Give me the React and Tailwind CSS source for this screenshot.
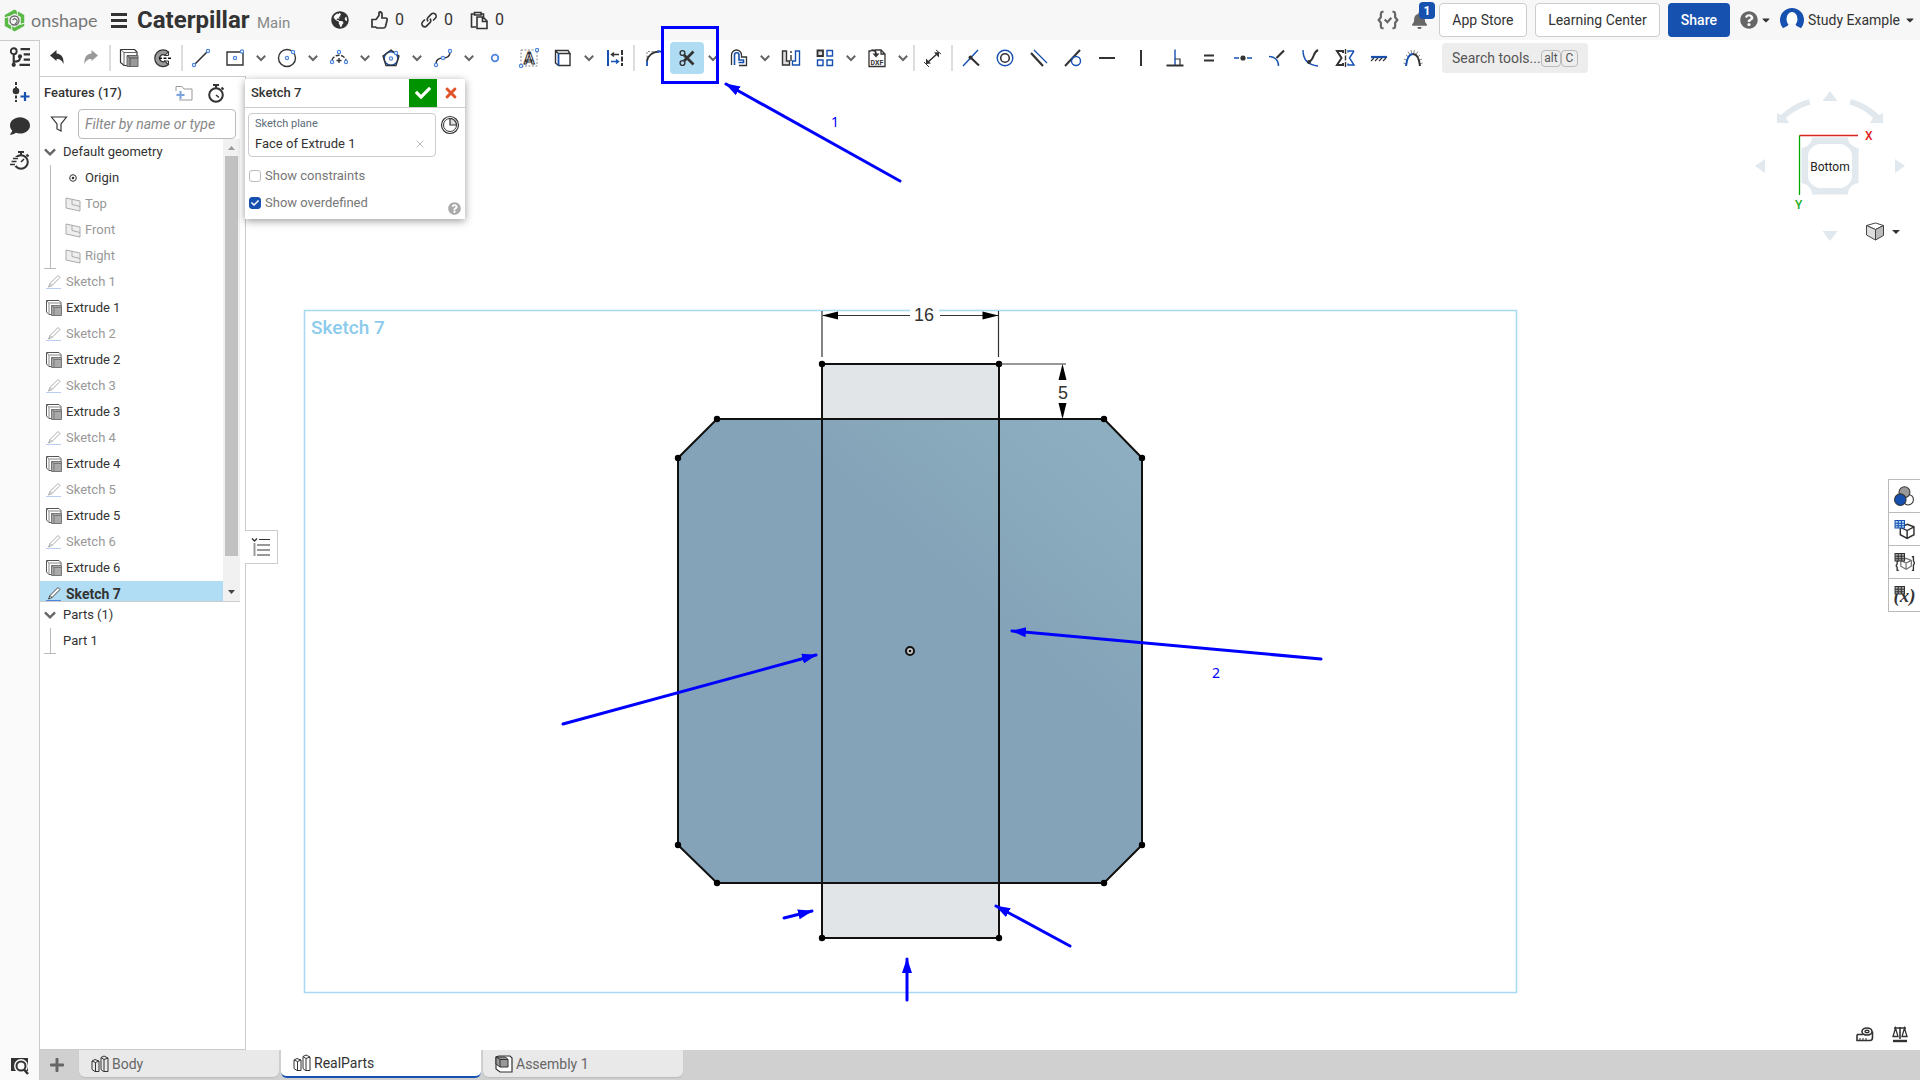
import { FaBell, FaCheck, FaComment, FaGlobeAmericas, FaQuestionCircle, FaTimes, FaCaretDown, FaPlus } from 'react-icons/fa'
import { useState } from 'react'

const DARK = '#333'
const BLUE = '#1651b0'
const SOFT = '#4f86dd'

function Icon({ size = 20, box = 20, children, className = '' }) {
  return (
    <svg
      width={size}
      height={size}
      viewBox={`0 0 ${box} ${box}`}
      fill="none"
      stroke={DARK}
      strokeWidth="1.4"
      className={`shrink-0 ${className}`}
      aria-hidden="true"
    >
      {children}
    </svg>
  )
}

// small sketch handle
function Dot({ x, y, r = 1.6 }) {
  return <circle cx={x} cy={y} r={r} fill="#fff" stroke={SOFT} strokeWidth="1.2" />
}

const glyphs = {
  undo: (
    <path d="M3 7.5L9.5 2v3.500c5 .5 7.500 4 7 10.500-1.200-3-3-5-7-5V13z" fill={DARK} stroke="none" />
  ),
  redo: (
    <path d="M17 7.500L10.500 2v3.500c-5 .5-7.500 4-7 10.500 1.200-3 3-5 7-5V13z" fill="#999" stroke="none" />
  ),
  extrude: (
    <>
      <path d="M1.500 1.500h14l2.500 2.500v13.500h-13l-3.500-3z" strokeWidth="1.200" fill="#fff" />
      <path d="M1.500 1.500l3.500 3h12.500M5 4.500v13" strokeWidth="1" stroke="#666" />
      <path d="M8 7.500h11v11H8z" fill="#999" stroke="#666" strokeWidth="1" />
      <path d="M8 7.500l3 2.500h8M11 10v8.500" stroke="#555" strokeWidth="1" />
    </>
  ),
  revolve: (
    <>
      <path d="M15.500 4A8.300 8.300 0 1 0 15.500 16.500L12 13a3.400 3.400 0 1 1 0-5.500z" fill="#999" strokeWidth="1.200" />
      <path d="M6 10.300h13" strokeDasharray="3 1.500" stroke="#111" />
      <path d="M11.500 7.500l4-3.500v3.500zM11.500 13l4 3.500v-3.500z" fill="#ddd" strokeWidth="1" />
    </>
  ),
  line: (
    <>
      <path d="M4 16L16 4" strokeWidth="1.600" />
      <Dot x={3} y={17} />
      <Dot x={17} y={3} />
    </>
  ),
  rect: (
    <>
      <path d="M2 4h16v13H2z" />
      <Dot x={10} y={10} />
      <Dot x={17} y={3.5} />
    </>
  ),
  circle: (
    <>
      <circle cx="10" cy="10" r="8.500" />
      <Dot x={10} y={10} />
      <Dot x={16} y={4} />
    </>
  ),
  arc: (
    <>
      <path d="M3 12a7.500 7.500 0 0 1 14 0" strokeDasharray="4 1.500" />
      <path d="M10 10v5M7.500 12.500h5" />
      <Dot x={3} y={14} />
      <Dot x={17} y={14} />
      <Dot x={10} y={4} />
    </>
  ),
  polygon: (
    <>
      <circle cx="10" cy="10.500" r="6.800" stroke={BLUE} />
      <path d="M10 2l8 6-3 9.500H5L2 8z" />
      <Dot x={10} y={10.5} />
      <Dot x={15} y={5} />
    </>
  ),
  spline: (
    <>
      <path d="M3 16c0-5 3-6 7-6s7-2 7-6" />
      <Dot x={3} y={17} />
      <Dot x={10} y={10} />
      <Dot x={17} y={3} />
    </>
  ),
  point: <circle cx="10" cy="10" r="3.300" stroke={SOFT} strokeWidth="1.800" />,
  text: (
    <>
      <path d="M2 2h16v16H2z" stroke="#888" strokeDasharray="2 1.500" strokeWidth="1" />
      <text x="10" y="16" textAnchor="middle" fontSize="16" fontWeight="700" fill="#fff" strokeWidth="1">A</text>
      <Dot x={18} y={2} />
      <Dot x={2} y={18} />
    </>
  ),
  use: (
    <>
      <path d="M2.500 3l3 2.500h11.500l-2-3H2.500zM2.500 3v12l3 2.500h11.500V5.500" />
      <path d="M5.500 5.500v12" stroke={BLUE} strokeWidth="1.800" />
    </>
  ),
  convert: (
    <>
      <path d="M3 2v16" stroke={BLUE} strokeWidth="2" />
      <path d="M17 2v16" strokeWidth="2" strokeDasharray="5 1.500" />
      <path d="M14 6.500H7m2-2l-2.500 2L9 8.500" />
      <path d="M6 13.500h7m-2-2l2.500 2-2.500 2" stroke={BLUE} />
    </>
  ),
  fillet: (
    <>
      <path d="M4 13V3.500h12" stroke="#888" strokeDasharray="2 1.500" strokeWidth="1" />
      <path d="M4 13C5 8 9 4 16 3.500" strokeWidth="1.800" />
      <path d="M4 13v5M14 3.500h5" stroke={BLUE} strokeWidth="1.800" />
    </>
  ),
  trim: (
    <>
      <circle cx="5.500" cy="5" r="2.400" />
      <circle cx="5.500" cy="15" r="2.400" />
      <path d="M7 7l9.500 9.500M7 13l9.500-9.500" strokeWidth="2.800" />
    </>
  ),
  offset: (
    <>
      <path d="M2.500 17V7a5 5 0 0 1 10 0v2h5v8.500H10" strokeWidth="1.300" />
      <path d="M5.500 17V7a2.200 2.200 0 0 1 4.500 0v5h4.500v2.500H9.500" stroke={BLUE} strokeWidth="1.600" />
    </>
  ),
  mirror: (
    <>
      <path d="M1.500 3h4v10h3v4h-7z" fill="#ddd" />
      <path d="M18.500 3h-4v10h-3v4h7z" stroke={BLUE} />
      <path d="M10 3v11" strokeDasharray="2 2 6 2" />
    </>
  ),
  pattern: (
    <>
      <path d="M2.500 2.500h5.500v5.500H2.500z" strokeWidth="1.800" fill="#ddd" />
      <path d="M12 2.500h5.500v5.500H12zM2.500 12h5.500v5.500H2.500zM12 12h5.500v5.500H12z" stroke={BLUE} />
    </>
  ),
  dxf: (
    <>
      <path d="M8 2h6l4 4v12.500H2V3h2M14 2v4h4" strokeWidth="1.300" />
      <path d="M4 2.500c4-1 5 1 5 4" strokeWidth="1.800" />
      <path d="M5.500 5.500h7L9 9.500z" fill={DARK} stroke="none" />
      <text x="10" y="17" textAnchor="middle" fontSize="7" fontWeight="700" fill={DARK} stroke="none">DXF</text>
    </>
  ),
  dimension: (
    <>
      <path d="M4 15L15 5" strokeWidth="1.600" />
      <path d="M3 16v-5.500l5 5zM16 4v5.500l-5-5z" fill={DARK} stroke="none" />
      <path d="M1 14l5 5M13 2l5 4" strokeWidth="1" />
    </>
  ),
  coincident: (
    <>
      <path d="M2 18L17 2" stroke={BLUE} />
      <path d="M9 9l9 8.500" strokeWidth="2.200" />
      <circle cx="9.500" cy="9.500" r="2" fill={DARK} stroke="none" />
    </>
  ),
  concentric: (
    <>
      <circle cx="10" cy="10" r="7.800" stroke={BLUE} />
      <circle cx="10" cy="10" r="4.300" strokeWidth="1.600" />
    </>
  ),
  parallel: (
    <>
      <path d="M2 5l12 13" strokeWidth="2.200" />
      <path d="M5 2l13 13" stroke={BLUE} strokeWidth="1.200" />
    </>
  ),
  tangent: (
    <>
      <path d="M2 18L17 2" strokeWidth="2" />
      <circle cx="13" cy="13" r="4.500" stroke={BLUE} />
    </>
  ),
  horizontal: <path d="M2 10h16" strokeWidth="2" />,
  vertical: <path d="M10 2v16" strokeWidth="2" />,
  perpendicular: (
    <>
      <path d="M10 1.500V17" stroke={BLUE} />
      <path d="M1.500 17.500h17" strokeWidth="2" />
      <path d="M10 11h5v6" strokeWidth="1.200" />
    </>
  ),
  equal: <path d="M5 7.500h10M5 12.500h10" strokeWidth="2" />,
  midpoint: (
    <>
      <path d="M1 10h5M14 10h5" stroke={BLUE} strokeWidth="1.600" />
      <circle cx="10" cy="10" r="2.600" fill={DARK} stroke="none" />
    </>
  ),
  normal: (
    <>
      <path d="M2 8.500c5 0 9.500 3 9.500 9.500" stroke={BLUE} />
      <path d="M9.500 10L17 2.500" strokeWidth="2.200" />
    </>
  ),
  pierce: (
    <>
      <path d="M2 2c0 8 4 15 15 16" stroke={BLUE} />
      <path d="M8 14c6-3 3-9 9-12" strokeWidth="2" />
      <circle cx="8" cy="14" r="2" fill={DARK} stroke="none" />
    </>
  ),
  symmetric: (
    <>
      <path d="M8 5V3H2l4.500 7L2 17h6v-2" strokeWidth="2" />
      <path d="M19 3h-6v1.500M19 3l-4.500 7 4.500 7h-6v-1.500" stroke={BLUE} />
      <path d="M10.500 1v18" strokeDasharray="5 1.500" />
    </>
  ),
  fix: (
    <>
      <path d="M2 9h16" stroke={BLUE} strokeWidth="2.200" />
      <path d="M5 10l-3 3M9 10l-3 3M13 10l-3 3M17 10l-3 3" strokeWidth="1.200" />
    </>
  ),
  curvature: (
    <>
      <path d="M.5 15l3 1M1 11l3.500 1.500M3 7l3 2.500M5 3.500l2.500 4M8 2l1 4M11.500 2l-1 4M15 3.500l-2.500 4M17 7l-3 2.500M19 11l-3.500 1.500M19.500 15l-3 1" stroke="#888" strokeWidth="1" />
      <path d="M3 18C4 9 7 6 10 6" stroke={BLUE} strokeWidth="2" />
      <path d="M10 6c3 0 6 3 7 12" strokeWidth="2" />
    </>
  ),
}

// '|' is a divider, 'v' adds the drop-down chevron
const tools = [
  ['undo'], ['redo'], '|', ['extrude'], ['revolve'], '|',
  ['line'], ['rect', 'v'], ['circle', 'v'], ['arc', 'v'], ['polygon', 'v'], ['spline', 'v'],
  ['point'], ['text'], ['use', 'v'], ['convert'], '|',
  ['fillet'], ['trim', 'v'], ['offset', 'v'], ['mirror'], ['pattern', 'v'], ['dxf', 'v'], '|',
  ['dimension'], '|',
  ['coincident'], ['concentric'], ['parallel'], ['tangent'], ['horizontal'], ['vertical'],
  ['perpendicular'], ['equal'], ['midpoint'], ['normal'], ['pierce'], ['symmetric'], ['fix'], ['curvature'],
]

function Chevron({ size = 10 }) {
  return (
    <svg width={size} height={size} viewBox="0 0 10 10" fill="none" stroke="#666" strokeWidth="2" aria-hidden="true">
      <path d="M.8 2.800L5 7l4.200-4.200" />
    </svg>
  )
}

function Stopwatch({ size = 20, fast }) {
  return (
    <Icon size={size}>
      <circle cx="11" cy="12" r="6.800" strokeWidth="2" />
      <path d="M8 2h6M11 2v3M16.500 4.500l2 2" strokeWidth="2" />
      <path d={fast ? 'M11 12l3-3' : 'M11 12l3 2.500'} strokeWidth="1.600" />
      {fast && <path d="M3 8.500h6M1 11.500h6M0 14.500h6" stroke="#fafafa" strokeWidth="3" />}
      {fast && <path d="M3 8.500h5M1.500 11.500h5M0 14.500h5" />}
    </Icon>
  )
}

function Counter({ label, children }) {
  return (
    <button aria-label={label} className="flex items-center gap-1.5 text-base text-[#333]">
      {children}
      <span>0</span>
    </button>
  )
}

function Header() {
  return (
    <header className="flex h-10 items-center bg-[#f7f7f7] pl-1 pr-1 select-none">
      <a href="#home" className="flex items-center gap-1.5" aria-label="onshape">
        <svg width="21" height="23" viewBox="0 0 21 23" fill="none" aria-hidden="true">
          <path d="M2.500 16V7l8-4.500 8 4.500v9l-8 4.500z" stroke="#5bb947" strokeWidth="3.500" />
          <path d="M0 9l5-1.500M13 0l.5 6M21 14l-5 1.500M8 23l-.5-6" stroke="#f7f7f7" strokeWidth="1" />
          <circle cx="10.500" cy="11.500" r="4.500" stroke="#666" strokeWidth="1.300" fill="#f7f7f7" />
          <path d="M8.500 11l2-1.500 2.500 1.500v2.500l-2 1.500" stroke="#666" strokeWidth="1.200" />
        </svg>
        <span className="w-[70px] font-['Lato'] text-lg leading-6 text-[#777]">onshape</span>
      </a>
      <button aria-label="Menu" className="ml-2.5 flex w-4 flex-col gap-[3px]">
        <span className="h-[3px] bg-[#333]" />
        <span className="h-[3px] bg-[#333]" />
        <span className="h-[3px] bg-[#333]" />
      </button>
      <h1 className="ml-2.5 w-28 text-2xl leading-7 font-bold whitespace-nowrap text-[#333]">Caterpillar</h1>
      <span className="mt-1.5 ml-2 w-[74px] text-[15px] text-[#888]">Main</span>
      <FaGlobeAmericas size={18} color={DARK} />
      <div className="ml-5 flex items-center gap-4">
        <Counter label="Likes">
          <Icon>
            <path d="M3 9.500h4l3-4V2.500c0-1 3-1 3 1.500v4h3.500c1.500 0 2 1 1.500 2.500l-1.500 6c-.3 1-1 1.500-2 1.500H8l-1.500-1H3z" strokeWidth="1.700" />
          </Icon>
        </Counter>
        <Counter label="Links">
          <Icon size={18}>
            <path d="M9 11.500a3 3 0 0 1 0-4.500l3.500-3.500a3 3 0 0 1 4.500 4.500l-2.500 2.500M11 8.500a3 3 0 0 1 0 4.500l-3.500 3.500A3 3 0 0 1 3 12l2.500-2.500" strokeWidth="1.800" />
          </Icon>
        </Counter>
        <Counter label="Copies">
          <Icon>
            <path d="M7 17H2.500V4H5M12 4h2.500v3M5.500 2.500h6.500V5H5.500z" strokeWidth="1.600" />
            <path d="M8 7h6l4 4v7.500H8zM13.500 7v4.500H18" strokeWidth="1.600" />
          </Icon>
        </Counter>
      </div>

      <div className="flex-1" />

      <button aria-label="Checks" className="text-[#666]">
        <Icon size={22}>
          <path d="M6 2.500H5C3.500 2.500 3.500 4 3.500 5v2.500L1.500 10l2 2.500V15c0 1 0 2.500 1.500 2.500h1M14 2.500h1c1.500 0 1.500 1.500 1.500 2.500v2.500l2 2.500-2 2.500V15c0 1 0 2.500-1.500 2.500h-1M7 9.500l2.500 2.500L13 8" stroke="#666" strokeWidth="2" />
        </Icon>
      </button>
      <button aria-label="Notifications" className="relative ml-3 h-5 w-4 text-[#666]">
        <FaBell size={17} />
        <span className="absolute -top-2 left-2 flex h-[17px] w-4 items-center justify-center rounded-sm bg-[#1651b0] text-xs font-bold text-white">
          1
        </span>
      </button>
      <button className="ml-3 h-[34px] w-[88px] rounded border border-[#ccc] bg-white text-sm text-[#333]">App Store</button>
      <button className="ml-2 h-[34px] w-[125px] rounded border border-[#ccc] bg-white text-sm whitespace-nowrap text-[#333]">
        Learning Center
      </button>
      <button className="ml-2 h-[34px] w-[62px] rounded bg-[#1651b0] text-sm font-medium text-white">Share</button>
      <button aria-label="Help" className="ml-2.5 flex items-center gap-0.5">
        <FaQuestionCircle size={18} color="#666" />
        <FaCaretDown size={12} color={DARK} />
      </button>
      <button className="ml-2 flex items-center gap-1 text-sm whitespace-nowrap text-[#333]">
        <svg width="24" height="24" viewBox="0 0 24 24" aria-hidden="true">
          <circle cx="12" cy="12" r="12" fill={BLUE} />
          <ellipse cx="12" cy="11" rx="5.500" ry="7" fill="#fff" />
          <path d="M2 22c2-4 6-3 6.500-6h7c.5 3 4.500 2 6.500 6v2H2z" fill="#f7f7f7" />
        </svg>
        <span>Study Example</span>
        <FaCaretDown size={12} color={DARK} />
      </button>
    </header>
  )
}

function Toolbar() {
  return (
    <div role="toolbar" aria-label="Sketch tools" className="flex h-9 shrink-0 items-center bg-white">
      {tools.map((tool, i) =>
        tool === '|' ? (
          <span key={i} className="mx-px h-[26px] w-0.5 shrink-0 bg-[#ddd]" />
        ) : (
          <div key={i} className="flex shrink-0 items-center">
            <button
              aria-label={tool[0]}
              className={`flex h-8 w-[34px] items-center justify-center ${tool[0] === 'trim' ? 'rounded bg-[#afdcf3]' : ''}`}
            >
              <Icon>{glyphs[tool[0]]}</Icon>
            </button>
            {tool[1] && (
              <button aria-label={`More ${tool[0]} tools`} className="flex w-[18px] justify-center">
                <Chevron />
              </button>
            )}
          </div>
        ),
      )}
      <button className="ml-3 flex h-[30px] w-[146px] shrink-0 items-center rounded bg-[#ededed] pl-2.5 text-sm whitespace-nowrap text-[#555]">
        <span className="flex-1 text-left">Search tools...</span>
        <kbd className="flex h-[17px] w-5 items-center justify-center rounded-sm border border-[#bbb] font-['Roboto'] text-xs">alt</kbd>
        <kbd className="mr-2.5 flex h-[17px] w-[17px] items-center justify-center rounded-sm border border-[#bbb] font-['Roboto'] text-xs">C</kbd>
      </button>
    </div>
  )
}

function Rail() {
  return (
    <nav aria-label="Panels" className="flex w-10 shrink-0 flex-col items-center gap-3.5 border-t border-r border-[#ccc] bg-[#fafafa] pt-1.5">
      <button aria-label="Feature tree">
        <Icon size={21}>
          <circle cx="4.500" cy="4" r="2.800" strokeWidth="1.800" />
          <path d="M4.500 7v11M4.500 14c5 0 6-1 6-5" strokeWidth="2" />
          <path d="M11 2h9M14 7h6M14 12h6M10 17h10" strokeWidth="2" />
          <circle cx="10.500" cy="9" r="2" fill={DARK} stroke="none" />
          <circle cx="4.500" cy="17" r="2" fill={DARK} stroke="none" />
        </Icon>
      </button>
      <button aria-label="Insert feature">
        <Icon>
          <path d="M6 0v20" strokeWidth="2" strokeDasharray="3 1.500" />
          <circle cx="6" cy="9" r="3.300" fill={DARK} stroke="none" />
          <path d="M15 10v9M10.500 14.500h9" stroke={BLUE} strokeWidth="2.200" />
        </Icon>
      </button>
      <button aria-label="Comments">
        <FaComment size={20} color={DARK} />
      </button>
      <button aria-label="Performance">
        <Stopwatch fast />
      </button>
      <button aria-label="Find" className="mt-auto mb-1">
        <Icon>
          <path d="M1 2h17v13H1z" fill={DARK} stroke="none" />
          <circle cx="11" cy="10" r="5" fill="#fafafa" stroke="#fafafa" strokeWidth="4" />
          <circle cx="11" cy="10" r="4.500" strokeWidth="2" />
          <path d="M14 13.500l4 4.500" strokeWidth="2.500" />
        </Icon>
      </button>
    </nav>
  )
}

const features = [1, 2, 3, 4, 5, 6].flatMap(n => [
  { kind: 'sketch', name: `Sketch ${n}` },
  { kind: 'extrude', name: `Extrude ${n}` },
])

function Pencil({ active }) {
  const line = active ? '#444' : '#aaa'
  return (
    <Icon size={16} box={16}>
      <path d="M2.500 13L4 9.500 12 1.500l2 2-8 8zM4 9.500l2 2" stroke={line} strokeWidth="1" fill="#fff" />
      <path d="M0 14.500h15" stroke={active ? SOFT : '#b9cdf3'} strokeWidth="1" />
    </Icon>
  )
}

function ExtrudeIcon() {
  return (
    <Icon size={16} box={16}>
      <path d="M.5.500h12.500l2 2V5M.5.500v11.500l2.500 2.500h2" stroke="#555" strokeWidth="1" />
      <path d="M3.500 3h11.500M3 3v11.500M.5.500L3 3" stroke="#888" strokeWidth="1" />
      <path d="M5.500 5.500h10v10h-10z" fill="#aaa" stroke="#777" strokeWidth="1" />
      <path d="M5.500 5.500l2.500 2h7.500M8 7.500v8" stroke="#777" strokeWidth="1" />
    </Icon>
  )
}

function PlaneIcon() {
  return (
    <Icon size={16} box={16}>
      <path d="M1 2l14 3v10L1 12z" fill="#eee" stroke="#aaa" strokeWidth="1" />
      <path d="M7 3.500v5l8 2M7 8.500" stroke="#aaa" strokeWidth="1" />
    </Icon>
  )
}

function FeaturePanel() {
  return (
    <aside className="flex w-[206px] shrink-0 flex-col border-t border-r border-b border-[#ccc] bg-white text-[13px] text-[#333]">
      <div className="flex h-8 items-center pl-1">
        <h2 className="flex-1 font-medium">Features (17)</h2>
        <button aria-label="Add folder" className="mr-3">
          <Icon size={18} box={18}>
            <path d="M4 16h13V5H9L7 2.500H1V7" stroke="#999" strokeWidth="1" />
            <path d="M5.500 7v8M1.500 11h8" stroke="#7ba3dc" strokeWidth="2" />
          </Icon>
        </button>
        <button aria-label="Rebuild times" className="mr-5">
          <Stopwatch size={20} />
        </button>
      </div>
      <div className="flex h-[30px] items-center gap-2.5 pl-2.5">
        <Icon size={18} box={18}>
          <path d="M1.500 2h15l-5.500 7v7l-4-2V9z" strokeWidth="1.200" />
        </Icon>
        <input
          aria-label="Filter by name or type"
          placeholder="Filter by name or type"
          className="h-[30px] w-[158px] rounded border border-[#bbb] px-1.5 text-sm italic placeholder:text-[#888]"
        />
      </div>

      <div className="flex h-[463px] w-[200px] border-b border-[#ccc]">
        <ul className="flex-1 overflow-hidden">
          <li>
            <button className="flex h-[26px] items-center gap-[7px] pl-1">
              <Chevron size={12} />
              Default geometry
            </button>
            <ul className="relative before:absolute before:top-0 before:left-2.5 before:h-full before:w-px before:bg-[#bbb] after:absolute after:bottom-0 after:left-1 after:h-px after:w-3 after:bg-[#bbb]">
              <li className="flex h-[26px] items-center gap-1 pl-[25px]">
                <Icon size={16} box={16}>
                  <circle cx="8" cy="8" r="3.300" strokeWidth="1" />
                  <circle cx="8" cy="8" r="1.300" fill={DARK} stroke="none" />
                </Icon>
                Origin
              </li>
              {['Top', 'Front', 'Right'].map(name => (
                <li key={name} className="flex h-[26px] items-center gap-1 pl-[25px] text-[#999]">
                  <PlaneIcon />
                  {name}
                </li>
              ))}
            </ul>
          </li>
          {features.map(f => (
            <li
              key={f.name}
              className={`flex h-[26px] items-center gap-1 pl-1.5 ${f.kind === 'sketch' ? 'text-[#999]' : 'text-[#333]'}`}
            >
              {f.kind === 'sketch' ? <Pencil /> : <ExtrudeIcon />}
              {f.name}
            </li>
          ))}
          <li className="flex h-[26px] items-center gap-1 bg-[#b0ddf4] pl-1.5 text-sm font-bold">
            <Pencil active />
            Sketch 7
          </li>
        </ul>
        <div className="flex w-[17px] flex-col items-center bg-[#f1f1f1]" aria-hidden="true">
          <svg width="17" height="17" viewBox="0 0 17 17"><path d="M5 11l3.500-4 3.500 4z" fill="#999" /></svg>
          <div className="h-[400px] w-[13px] bg-[#c1c1c1]" />
          <svg width="17" height="17" viewBox="0 0 17 17" className="mt-auto"><path d="M5 6l3.500 4L12 6z" fill="#444" /></svg>
        </div>
      </div>

      <button className="flex h-[26px] items-center gap-[7px] pl-1">
        <Chevron size={12} />
        Parts (1)
      </button>
      <ul className="relative before:absolute before:top-0 before:left-2.5 before:h-full before:w-px before:bg-[#bbb] after:absolute after:bottom-0 after:left-1 after:h-px after:w-3 after:bg-[#bbb]">
        <li className="flex h-[26px] items-center pl-[23px]">Part 1</li>
      </ul>
    </aside>
  )
}

function CheckRow({ label, checked, onChange }) {
  return (
    <label className="flex h-[27px] items-center gap-1 pl-1 text-[13px] text-[#777]">
      <span className="grid size-3 place-items-center">
        <input
          type="checkbox"
          checked={checked}
          onChange={onChange}
          className="col-start-1 row-start-1 size-3 appearance-none rounded-[3px] border border-[#bbb] bg-white checked:border-[#1651b0] checked:bg-[#1651b0]"
        />
        {checked && <FaCheck size={8} color="#fff" className="pointer-events-none col-start-1 row-start-1" />}
      </span>
      {label}
    </label>
  )
}

function SketchDialog() {
  const [constraints, setConstraints] = useState(false)
  const [overdefined, setOverdefined] = useState(true)

  return (
    <section aria-label="Sketch 7" className="absolute top-[3px] -left-px h-[140px] w-[220px] bg-white text-[#333] shadow-[0_2px_8px_rgba(0,0,0,0.4)]">
      <div className="flex h-[29px] border-b border-[#ccc] pl-1.5">
        <h2 className="flex-1 text-[13px] leading-7 font-medium">Sketch 7</h2>
        <button aria-label="Accept" className="flex w-7 items-center justify-center bg-[#009300]">
          <FaCheck size={16} color="#fff" />
        </button>
        <button aria-label="Cancel" className="flex w-7 items-center justify-center">
          <FaTimes size={16} color="#e0522a" />
        </button>
      </div>
      <div className="flex gap-1 pt-[5px] pl-[3px]">
        <div className="h-11 w-[188px] rounded-sm border border-[#ccc] pl-1.5">
          <div className="pt-0.5 text-[11px] leading-4 text-[#5b6b7a]">Sketch plane</div>
          <div className="flex items-center text-[13px] leading-6">
            <span className="flex-1">Face of Extrude 1</span>
            <button aria-label="Clear sketch plane" className="mr-2.5">
              <Icon size={10} box={10}><path d="M1.500 1.500l7 7M8.500 1.500l-7 7" stroke="#bbb" strokeWidth="1" /></Icon>
            </button>
          </div>
        </div>
        <button aria-label="Final" className="mt-0.5 self-start">
          <Icon>
            <circle cx="10" cy="10" r="8.500" strokeWidth="1.200" />
            <circle cx="10" cy="10" r="6.500" strokeWidth="1" />
            <path d="M10 3.500V10h6.500A6.500 6.500 0 0 0 10 3.500z" fill="#ddd" strokeWidth="1.200" />
          </Icon>
        </button>
      </div>
      <div className="pt-[5px]">
        <CheckRow label="Show constraints" checked={constraints} onChange={() => setConstraints(c => !c)} />
        <CheckRow label="Show overdefined" checked={overdefined} onChange={() => setOverdefined(c => !c)} />
      </div>
      <button aria-label="Sketch help" className="absolute right-1 bottom-1">
        <FaQuestionCircle size={13} color="#aaa" />
      </button>
    </section>
  )
}

const corners = [
  [717, 419], [1104, 419], [1142, 458], [1142, 845], [1104, 883], [717, 883], [678, 845], [678, 458],
]
const slot = [[822, 364], [999, 364], [999, 938], [822, 938]]
const toPoints = list => list.map(p => p.join(',')).join(' ')

function Drawing() {
  return (
    <svg
      viewBox="246 76 1674 974"
      preserveAspectRatio="xMinYMin meet"
      className="block h-full w-full"
      role="img"
      aria-label="Sketch 7 drawing"
    >
      <defs>
        <linearGradient id="face" x1="1" y1="0" x2="0.300" y2="0.800">
          <stop offset="0" stopColor="#8fb0c2" />
          <stop offset="0.500" stopColor="#84a3b8" />
          <stop offset="1" stopColor="#84a3b8" />
        </linearGradient>
      </defs>
      <rect x="304.500" y="310.500" width="1212" height="682" fill="none" stroke="#a5daf2" strokeWidth="1.500" />
      <text x="311" y="334" fontSize="19" fontWeight="500" fill="#8ccbec">Sketch 7</text>
      <polygon points={toPoints(slot)} fill="#e1e5e8" />
      <polygon points={toPoints(corners)} fill="url(#face)" stroke="#111" strokeWidth="2" />
      <polygon points={toPoints(slot)} fill="none" stroke="#111" strokeWidth="2" />
      {[...corners, ...slot].map(([x, y]) => (
        <circle key={`${x}-${y}`} cx={x} cy={y} r="3.200" fill="#000" />
      ))}
      <circle cx="910" cy="651" r="4" fill="#ccc" stroke="#111" strokeWidth="2" />
      <circle cx="910" cy="651" r="1.300" fill="#111" />

      {/* dimensions */}
      <g stroke="#333" strokeWidth="1.200">
        <path d="M822 311v46M998.500 311v46M823 315.500h87M940 315.500h58M1000 364h66M1062.500 366v14M1062.500 403v14" />
      </g>
      <path d="M822 315.500l16-4v8zM998.500 315.500l-16-4v8zM1062.500 364l-4 16h8zM1062.500 419l-4-16h8z" fill="#000" />
      <rect x="910" y="306" width="29" height="22" fill="#fff" fillOpacity="0.900" />
      <g fontFamily="Liberation Sans, sans-serif" fontSize="18" textAnchor="middle" fill="#333">
        <text x="924" y="321">16</text>
        <text x="1063" y="399">5</text>
      </g>
    </svg>
  )
}

function ViewCube() {
  return (
    <svg width="180" height="180" viewBox="0 0 180 180" className="absolute top-1 right-0" role="img" aria-label="View cube: Bottom">
      <g fill="#e1e8ee">
        <path d="M82.500 21L90 11l7.500 10zM82.500 151h15L90 161zM25 79v14l-10-7zM155 79v14l10-7z" />
        <path d="M69 19l1.500 5.500C62 27 54 31 46 38l3 5H37V33l4 2c8-8 18-13 28-16zM111 19l-1.500 5.500C118 27 126 31 133 38l-3 5h13V33l-4 2c-8-8-18-13-28-16z" />
        <path d="M72 57.500h36c0 6 5 10 10.500 10.500v35c-6 1-10.500 5-10.500 11.500H72C72 108 67 104 61.500 103V68C67 67.500 72 63 72 57.500z" />
      </g>
      <path d="M79 64h22c6 1 11 6 11 12v20c0 6-5 11-11 12H79c-6-1-11-6-11-12V76c0-6 5-11 11-12z" fill="#fff" />
      <path d="M59.500 55.500H118" stroke="#d22" strokeWidth="1.300" />
      <path d="M59.500 55.500V115" stroke="#0a0" strokeWidth="1.300" />
      <text x="90" y="91" textAnchor="middle" fontSize="12" fill="#222">Bottom</text>
      <text x="125" y="60" fontSize="12" fontWeight="500" fill="#d22">X</text>
      <text x="55" y="129" fontSize="12" fontWeight="500" fill="#2a2">Y</text>
      <g stroke="#444" strokeWidth="1">
        <path d="M126.500 145.500l9-2.500 8 2.500-8 4z" fill="#fff" />
        <path d="M126.500 145.500l9 4V160l-9-5z" fill="#ddd" />
        <path d="M143.500 145.500l-8 4V160l8-4.500z" fill="#bbb" />
      </g>
      <path d="M152 150h8l-4 4z" fill="#333" />
    </svg>
  )
}

function TableGrid({ color, fill }) {
  return (
    <>
      <path d="M1 1.500h9v7H1z" fill={fill} stroke={color} strokeWidth="1" />
      <path d="M4 1.500v7M7 1.500v7M1 4h9M1 6.500h9" stroke={color} strokeWidth="1" />
    </>
  )
}

const cubePath = 'M12.500 5L19 7.500V15l-6.500 3.500L6 15V8zM6 8l6.500 3L19 7.500M12.500 11v7.500'

function RightRail() {
  const cell = 'flex h-[33px] w-[31px] items-center justify-center border-b border-[#bbb]'
  return (
    <div className="absolute top-[403px] right-0 border-t border-l border-[#bbb] bg-white">
      <button aria-label="Appearance" className={cell}>
        <Icon size={21}>
          <circle cx="13.500" cy="13" r="5" fill="#fff" strokeWidth="1" />
          <circle cx="10" cy="6" r="5.200" fill="#999" strokeWidth="1" />
          <circle cx="6" cy="13" r="5.500" fill={BLUE} strokeWidth="1" />
        </Icon>
      </button>
      <button aria-label="Configurations" className={cell}>
        <Icon size={21}>
          <path d={cubePath} />
          <TableGrid color={BLUE} fill="#b7dcf5" />
        </Icon>
      </button>
      <button aria-label="Custom tables" className={cell}>
        <Icon size={21}>
          <path d="M11.500 6l5 2v5.500l-5 3-5-3V8zM6.500 8l5 2.500 5-2.500M11.500 10.500v6" strokeWidth="1.200" stroke="#777" />
          <path d="M4.500 8.500H3v3l-1 1.500 1 1.500v3h1.500M17 4.500h1.500v4l1 2-1 2v5H17" strokeWidth="1.300" />
          <TableGrid color={DARK} fill="#aaa" />
        </Icon>
      </button>
      <button aria-label="Variables" className={cell}>
        <Icon size={21}>
          <text x="10" y="16" textAnchor="middle" fontFamily="Liberation Serif, serif" fontSize="18" fontWeight="700" fontStyle="italic" fill={DARK} stroke="none">(x)</text>
          <TableGrid color={DARK} fill="#aaa" />
        </Icon>
      </button>
    </div>
  )
}

function Canvas() {
  return (
    <main className="relative min-w-0 flex-1 bg-white">
      <Drawing />
      <SketchDialog />
      <button aria-label="Toggle feature list" className="absolute top-[454px] -left-px flex h-[34px] w-[33px] items-center justify-center border border-l-0 border-[#ccc] bg-white">
        <Icon size={20}>
          <path d="M1 1.500l2.500 2.500L6 1.500" />
          <path d="M3.500 6v13" stroke="#999" strokeWidth="2" />
          <path d="M8 2.500h11M6 8h13M6 13h13M6 18h13" strokeWidth="1.200" />
        </Icon>
      </button>
      <ViewCube />
      <RightRail />
      <div className="absolute right-2.5 bottom-1.5 flex gap-[15px]">
        <button aria-label="Measure">
          <Icon>
            <path d="M2 10.500h6M2 10.500v6h13c2 0 2.500-1 2.500-3V7.500" strokeWidth="1.600" />
            <ellipse cx="12" cy="7.500" rx="5" ry="3.500" strokeWidth="1.600" />
            <ellipse cx="12" cy="7.500" rx="2" ry="1.300" />
            <path d="M5 14v2M8 14v2M11 14v2" strokeWidth="1" />
          </Icon>
        </button>
        <button aria-label="Mass properties">
          <Icon>
            <path d="M4 4h12M10 3v12" strokeWidth="1.600" />
            <path d="M5.500 4L3 12.500h5L5.500 4zM14.500 4L12 12.500h5z" strokeWidth="1.300" />
            <path d="M3 17h14" strokeWidth="2.400" />
          </Icon>
        </button>
      </div>
    </main>
  )
}

function PartIcon() {
  return (
    <Icon size={18} box={18} className="shrink-0">
      <path d="M1 6l3-1.500L8 6v10.500H4L1 14.500zM1 6l3.500 1.500V16.500M4.500 7.500L8 6M10 2.500L13 1l4 2v13.500h-4.500L10 14.500zM10 2.500l3 2v12M13 4.500l4-1.500" strokeWidth="1" />
    </Icon>
  )
}

function BottomTabs() {
  const tab = 'flex h-[27px] w-[200px] items-center gap-[3px] rounded-b-md bg-[#e9e9e9] pl-3 text-sm text-[#666] shadow-[0_1px_1px_#bbb]'
  return (
    <div role="tablist" className="flex h-[30px] shrink-0 items-start gap-0.5 bg-[#d0d0d0]">
      <button aria-label="Add tab" className="flex h-[30px] w-[37px] items-center justify-center pr-1">
        <FaPlus size={16} color="#666" />
      </button>
      <button role="tab" aria-selected="false" className={tab}>
        <PartIcon />
        Body
      </button>
      <button role="tab" aria-selected="true" className="flex h-7 w-[200px] items-center gap-[3px] rounded-b-md border-b-2 border-[#1651b0] bg-white pl-3 text-sm text-[#333]">
        <PartIcon />
        RealParts
      </button>
      <button role="tab" aria-selected="false" className={tab}>
        <Icon size={18} box={18}>
          <path d="M1 2l3-1h11l2 2v14H5l-4-3z" strokeWidth="1.200" fill="#fff" />
          <path d="M1 2h9.500l2.500 2.500V12H5L1 9z" fill="#999" strokeWidth="1" />
          <path d="M1 2l4 2.500h8M5 4.500V12" strokeWidth="1" />
        </Icon>
        Assembly 1
      </button>
    </div>
  )
}

const arrows = [
  { from: [900, 181], to: [726, 84] },
  { from: [1321, 659], to: [1012, 631] },
  { from: [563, 724], to: [816, 655] },
  { from: [784, 918], to: [812, 911] },
  { from: [1070, 946], to: [996, 906] },
  { from: [907, 1000], to: [907, 959] },
]

// tutorial marks laid over the whole workspace
function Annotations() {
  return (
    <svg viewBox="0 0 1920 1080" preserveAspectRatio="xMinYMin meet" className="pointer-events-none absolute inset-0 h-full w-full" aria-hidden="true">
      <defs>
        <marker id="head" markerUnits="userSpaceOnUse" markerWidth="16" markerHeight="12" refX="14" refY="5" orient="auto">
          <path d="M0 0l15 5-15 5z" fill="#00f" />
        </marker>
      </defs>
      <rect x="662.500" y="27.500" width="55" height="55" fill="none" stroke="#00f" strokeWidth="3" />
      {arrows.map(({ from, to }) => (
        <path key={from.join()} d={`M${from.join(' ')}L${to.join(' ')}`} stroke="#00f" strokeWidth="3" strokeLinecap="round" markerEnd="url(#head)" />
      ))}
      <g fill="#00f" fontSize="14" fontFamily="Noto Sans, sans-serif">
        <text x="831" y="127">1</text>
        <text x="1212" y="678">2</text>
      </g>
    </svg>
  )
}

export default function App() {
  return (
    <div className="relative flex h-screen flex-col overflow-hidden bg-white font-['Roboto','Liberation_Sans',sans-serif]">
      <Header />
      <div className="flex min-h-0 flex-1">
        <Rail />
        <div className="flex min-w-0 flex-1 flex-col">
          <Toolbar />
          <div className="flex min-h-0 flex-1">
            <FeaturePanel />
            <Canvas />
          </div>
          <BottomTabs />
        </div>
      </div>
      <Annotations />
    </div>
  )
}
